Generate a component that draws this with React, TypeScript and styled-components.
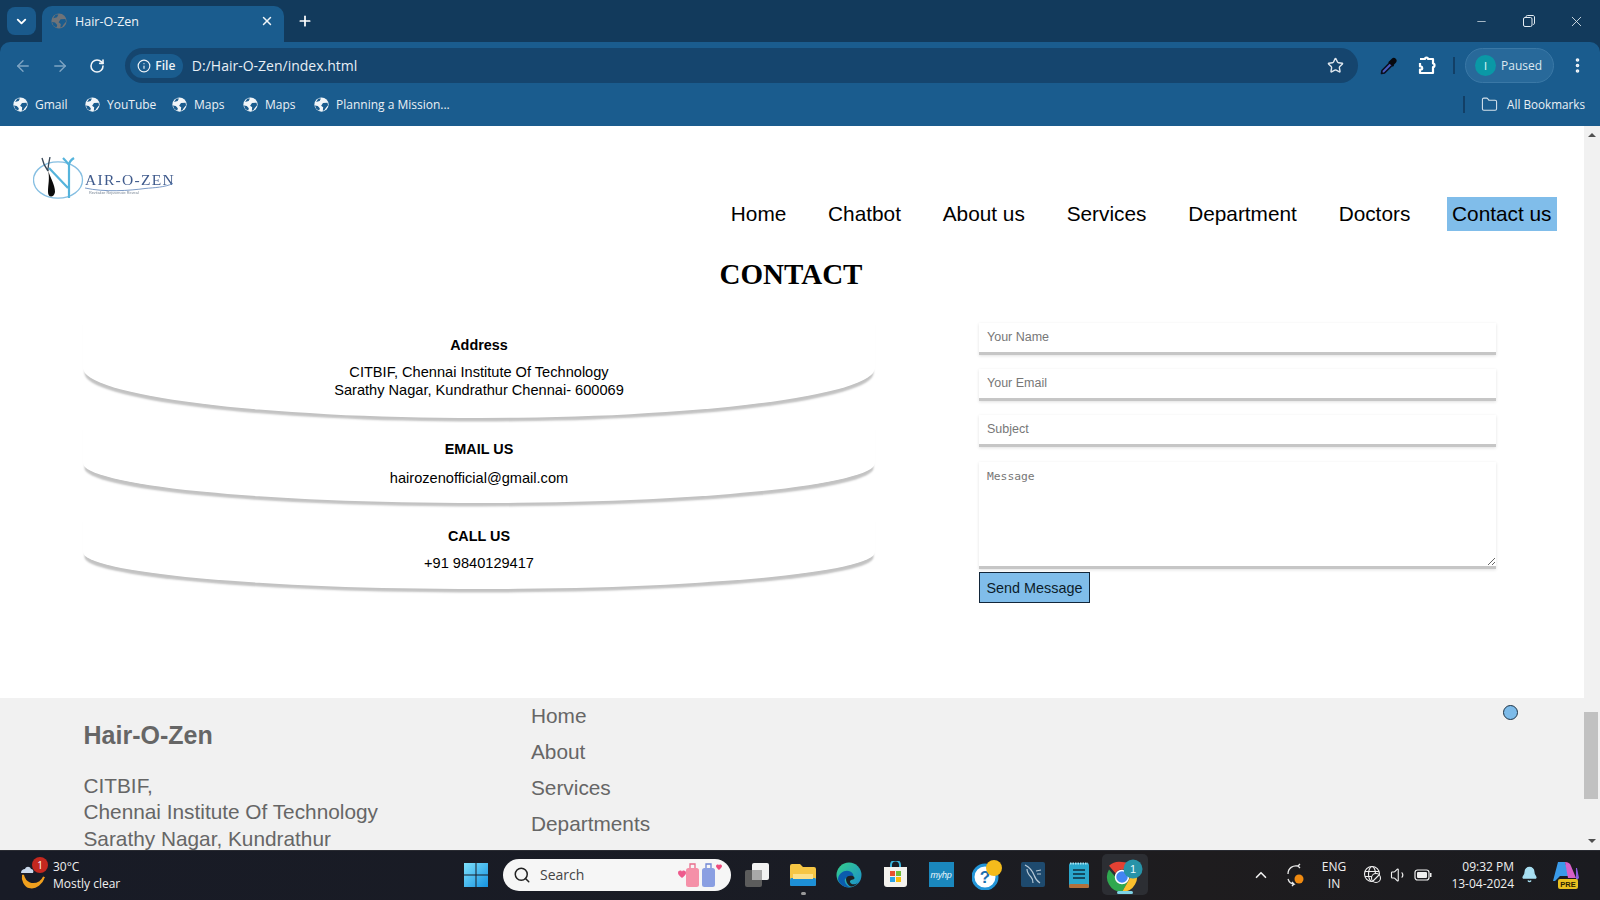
import React from "react";
import styled, { createGlobalStyle } from "styled-components";
import { ChevronDown, X, Plus, ArrowLeft, ArrowRight, RotateCw, Info, Star, MoreVertical, Folder, Minus, Search as SearchIcon, ChevronUp, Volume1, Bell } from "lucide-react";

const Global = createGlobalStyle`
  html, body { margin: 0; padding: 0; height: 100%; overflow: hidden; background: #fff; }
  #root { height: 100%; }
  * { box-sizing: border-box; }
`;

const Screen = styled.div`
  width: 1600px; height: 900px; display: flex; flex-direction: column; overflow: hidden;
  font-family: "Liberation Sans", Arial, sans-serif;
`;

/* ---------- browser chrome ---------- */
const ChromeFrame = styled.header`
  flex: none; background: #123a5c; font-family: "Open Sans", "Noto Sans", sans-serif; color: #fff;
`;
const TabStrip = styled.div`
  height: 42px; display: flex; align-items: flex-end; padding-left: 7px;
`;
const TabMenu = styled.button`
  width: 29px; height: 28px; margin: 0 6px 7px 0; border: 0; border-radius: 8px; background: #1a5a8c; color: #fff;
  display: flex; align-items: center; justify-content: center; padding: 0;
`;
const Tab = styled.div`
  width: 242px; height: 36px; background: #1a5c8e; border-radius: 10px 10px 0 0; display: flex; align-items: center;
  padding: 0 10px 6px 9px; font-size: 12.5px; color: #f0f4f8; gap: 8px;
`;
const TabTitle = styled.span`flex: 1;`;
const NewTab = styled.button`
  width: 28px; height: 28px; margin: 0 0 1px 7px; align-self: center; border: 0; background: none; color: #fff; padding: 0;
  display: flex; align-items: center; justify-content: center;
`;
const WindowControls = styled.div`
  margin-left: auto; height: 42px; display: flex; align-items: center; color: #e4ecf2;
`;
const WinButton = styled.div`
  width: 47.5px; height: 42px; display: flex; align-items: center; justify-content: center;
`;
const Toolbar = styled.div`
  height: 42px; background: #1a5c8e; border-radius: 10px 10px 0 0; display: flex; align-items: center; padding: 5px 0 0 5px;
`;
const NavIcon = styled.div<{ $dim?: boolean }>`
  width: 36px; height: 34px; margin-right: 1px; display: flex; align-items: center; justify-content: center;
  color: ${(p) => (p.$dim ? "#7fa5c4" : "#f2f6f9")};
`;
const UrlBar = styled.div`
  width: 1235px; height: 35px; margin-left: 9px; border-radius: 18px; background: #15456e; display: flex; align-items: center; padding: 0 14px 0 5px;
`;
const FileChip = styled.div`
  width: 53px; height: 24px; border-radius: 12px; background: #1a5c8e; display: flex; align-items: center; justify-content: center; gap: 4px;
  font-size: 12px; font-weight: 600; color: #eef3f7;
`;
const UrlText = styled.span`
  margin-left: 9px; flex: 1; font-size: 14px; color: #e8eff5;
`;
const ToolIcon = styled.div<{ $w: number; $ml?: number }>`
  width: ${(p) => p.$w}px; height: 34px; margin-left: ${(p) => p.$ml ?? 0}px; display: flex; align-items: center; justify-content: center; color: #f4f7fa; flex: none;
`;
const Divider = styled.div<{ $mx: number }>`
  width: 2px; height: 17px; background: #123f66; margin: 0 ${(p) => p.$mx}px; flex: none;
`;
const ProfilePill = styled.div`
  width: 89px; height: 35px; margin-left: 2px; border-radius: 18px; background: #28699a; border: 1px solid #3a78a6; display: flex; align-items: center; padding-left: 9px; gap: 5px;
  font-size: 12px; color: #dbe7f0; flex: none;
`;
const Avatar = styled.div`
  width: 21px; height: 21px; border-radius: 50%; background: #0a98a6; color: #e8fbfd; font-size: 11px; display: flex; align-items: center; justify-content: center;
`;
const BookmarksBar = styled.div`
  height: 42px; background: #1a5c8e; display: flex; align-items: center; padding: 0 15px 2px 13px; font-size: 12px; color: #eaf0f5;
`;
const Bookmark = styled.div<{ $w: number }>`
  width: ${(p) => p.$w}px; display: flex; align-items: center; gap: 7px; white-space: nowrap; flex: none;
`;
const BookmarkSpacer = styled.div`flex: 1;`;
const AllBookmarks = styled.div`
  margin-left: 16px; display: flex; align-items: center; gap: 9px; white-space: nowrap; color: #eaf0f5; font-size: 11.7px;
`;

/* ---------- page ---------- */
const Viewport = styled.div`
  flex: 1; min-height: 0; display: flex; overflow: hidden; background: #fff;
`;
const Page = styled.main`
  flex: 1; min-width: 0; display: flex; flex-direction: column; overflow: hidden; color: #000;
`;
const Scrollbar = styled.div`
  width: 16px; flex: none; background: #f1f1f1; display: flex; flex-direction: column; align-items: center; padding-top: 7px;
`;
const ScrollUp = styled.div`
  width: 0; height: 0; border-left: 4px solid transparent; border-right: 4px solid transparent; border-bottom: 4px solid #505050; margin-left: -1px;
`;
const ScrollThumb = styled.div`
  width: 14px; height: 87px; margin: 575px 2px 0 0; background: #c1c1c1;
`;
const ScrollDown = styled.div`
  width: 0; height: 0; border-left: 4px solid transparent; border-right: 4px solid transparent; border-top: 4px solid #505050; margin: 40px 0 0 -1px;
`;
const SiteHeader = styled.div`
  height: 127px; flex: none; display: flex; justify-content: space-between; padding: 31px 27.5px 0 33px;
`;
const LogoMark = styled.svg`display: block; flex: none; filter: blur(0.4px);`;
const SiteNav = styled.nav`
  display: flex; gap: 31.8px; align-items: flex-start; margin-top: 40px;
`;
const NavLink = styled.a<{ $active?: boolean }>`
  font-size: 20.8px; line-height: 34px; padding: 0 5px; color: #000; white-space: nowrap; height: 34px;
  background: ${(p) => (p.$active ? "#80bdea" : "transparent")};
`;
const PageTitle = styled.h2`
  margin: 0 2px 0 0; height: 65px; padding-top: 5px; text-align: center; font-family: "Liberation Serif", "Times New Roman", serif; font-weight: 700; font-size: 29px; line-height: 33px;
  color: #000;
`;
const ContactGrid = styled.section`
  height: 380px; flex: none; display: flex; padding-left: 83px;
`;
const InfoColumn = styled.div`
  width: 792px; flex: none; display: flex; flex-direction: column;
`;
const InfoCard = styled.div<{ $h: number; $pt: number; $gap: number; $mt: number }>`
  height: ${(p) => p.$h}px; margin-top: ${(p) => p.$mt}px; padding-top: ${(p) => p.$pt}px; text-align: center;
  border-radius: 0 0 50% 50%; box-shadow: 0 5px 2px -1.5px rgba(0, 0, 0, 0.24); background: #fff;
  h4 { margin: 0 0 ${(p) => p.$gap}px; font-size: 14.4px; line-height: 17px; font-weight: 700; }
  p { margin: 0; font-size: 14.6px; line-height: 17.5px; }
`;
const ContactForm = styled.form`
  width: 517px; margin-left: 104px; flex: none; display: flex; flex-direction: column; padding-top: 5px;
`;
const TextField = styled.input`
  display: block; width: 100%; height: 32px; margin-bottom: 14px; border: 0; border-bottom: 3px solid #c6c6c6; padding: 0 8px 2px; outline: 0;
  font-family: "Liberation Sans", Arial, sans-serif; font-size: 12.5px; background: #fff;
  box-shadow: 0 1px 3px rgba(0, 0, 0, 0.12);
  &::placeholder { color: #777; opacity: 1; }
`;
const MessageField = styled.textarea`
  display: block; width: 100%; height: 107px; margin: 1px 0 3px; border: 0; border-bottom: 3px solid #c6c6c6; padding: 8px; outline: 0;
  font-family: "DejaVu Sans Mono", monospace; font-size: 11.3px; background: #fff;
  box-shadow: 0 1px 3px rgba(0, 0, 0, 0.12);
  &::placeholder { color: #777; opacity: 1; }
`;
const SendButton = styled.button`
  width: 111px; height: 31px; padding: 0; background: #80bdea; border: 1px solid #12263a; font-family: "Liberation Sans", Arial, sans-serif; font-size: 14.4px; color: #0c1c2a;
`;
const Footer = styled.footer`
  flex: 1; min-height: 0; background: #f1f1f1; display: flex; padding-left: 83.5px; position: relative; color: #666; overflow: hidden;
`;
const FooterAbout = styled.div`
  width: 447.5px; flex: none; padding-top: 21px;
  h3 { margin: 0 0 22px; font-size: 25px; line-height: 32px; font-weight: 700; color: #666; }
  p { margin: 0; font-size: 20.8px; line-height: 26.3px; }
`;
const FooterLinks = styled.div`
  display: flex; flex-direction: column; margin-top: -0.5px;
  a { font-size: 20.8px; line-height: 36.3px; color: #666; }
`;
const ScrollTop = styled.div`
  position: absolute; left: 1503px; top: 7px; width: 15px; height: 15px; border-radius: 50%; background: #7dbbe9; border: 1px solid #1d3346;
`;

/* ---------- taskbar ---------- */
const Taskbar = styled.footer`
  height: 50px; flex: none; background: linear-gradient(90deg, #181b26 0%, #1a1c24 55%, #1e1c1e 75%, #1a1b20 100%); display: flex; align-items: center; color: #f0f0f0;
  font-family: "Open Sans", "Noto Sans", sans-serif; border-top: 1px solid #2a2c33; padding-bottom: 2px;
`;
const Weather = styled.div`
  width: 453px; flex: none; display: flex; align-items: center; padding-left: 20px; gap: 7px; font-size: 12px; line-height: 17px;
`;
const WeatherIconWrap = styled.div`
  position: relative; width: 26px; height: 30px; flex: none;
`;
const WeatherBadge = styled.span`
  position: absolute; left: 12px; top: -3px; width: 16px; height: 16px; border-radius: 50%; background: #c4281f; color: #fff; font-size: 10px; line-height: 16px; text-align: center;
`;
const TaskCell = styled.div<{ $active?: boolean }>`
  width: 46px; height: 41px; flex: none; display: flex; align-items: center; justify-content: center; position: relative; border-radius: 5px;
  background: ${(p) => (p.$active ? "#2c2e33" : "transparent")};
`;
const ActiveMark = styled.span`
  position: absolute; bottom: 1px; left: 15px; width: 16px; height: 3px; border-radius: 2px; background: #7fd3e6;
`;
const OpenMark = styled.span`
  position: absolute; bottom: 0; left: 21px; width: 5px; height: 3px; border-radius: 2px; background: #9a9a9a;
`;
const SearchPill = styled.div`
  width: 228px; height: 32px; margin: 0 3px 0 4px; border-radius: 16px; background: #f6f6f6; display: flex; align-items: center; padding: 0 5px 0 10px; gap: 9px;
  font-size: 14px; color: #444; flex: none;
`;
const SearchLabel = styled.span`flex: 1;`;
const Tray = styled.div`
  margin-left: 96px; display: flex; align-items: center; flex: none;
`;
const TrayCell = styled.div<{ $w: number; $ml?: number }>`
  width: ${(p) => p.$w}px; height: 40px; margin-left: ${(p) => p.$ml ?? 0}px; display: flex; align-items: center; justify-content: center; flex: none; color: #f0f0f0;
`;
const LangText = styled.div`
  font-size: 12px; line-height: 17px; text-align: center; width: 40px; flex: none;
`;
const ClockText = styled.div`
  font-size: 12px; line-height: 17px; text-align: right; width: 77px; flex: none; margin-left: 2px; white-space: nowrap;
`;

/* ---------- drawings ---------- */
const GlobeIcon = ({ size = 15, ground = "#1a5c8e", fill = "#f1f5f8" }) => (
  <svg width={size} height={size} viewBox="0 0 16 16">
    <circle cx="8" cy="8" r="7.6" fill={fill} />
    <path d="M2.2 5.2 6 4.2 7.4 1.6 4.6 1.6ZM9.6 6.3 14.4 6 15 8.8 12.6 11.6 11 14 9.4 14.6 9.8 11 7.6 9.2Z" fill={ground} />
    <path d="M1 9l3 .6 2.2 2.4-.6 2.4L2.6 13Z" fill={ground} />
  </svg>
);
const Logo = () => (
  <LogoMark width="145" height="46" viewBox="0 0 145 46">
    <ellipse cx="25" cy="23" rx="24.5" ry="18.2" fill="none" stroke="#86bfe2" strokeWidth="1.3" />
    <path d="M9 1 C10 6 12 10 15 14 M17 0 C16 5 15 9 15 14" stroke="#3a4a5a" strokeWidth="1.3" fill="none" />
    <path d="M15 13 C17 20 22 28 22 35 C21 41 15 41 15 35 C15 27 17 22 15 13Z" fill="#0b0b0b" />
    <path d="M16 11 L35 31 M36 41 L36 8 C36 5 38 3 41 1 M36 8 C34 5 32 3 30 1" stroke="#55b4dc" strokeWidth="2.2" fill="none" />
    <text x="52" y="28" fontFamily="'Liberation Serif', serif" fontSize="15.5" letterSpacing="1.3" fill="#3f5a8c">AIR-O-ZEN</text>
    <path d="M52 31 C72 35.5 97 33.5 112 31.5 C122 30.5 131 30.500 140 26.5" stroke="#6d8fc0" strokeWidth="0.9" fill="none" />
    <text x="56" y="37" fontFamily="'Liberation Sans', sans-serif" fontSize="3.8" fill="#7a8796">Revitalize Rejuvenate Reveal</text>
  </LogoMark>
);
const Dropper = () => (
  <svg width="20" height="20" viewBox="0 0 20 20">
    <path d="M2.5 17.5 L3 14.5 L11 6.5 L13.5 9 L5.5 17 Z" fill="#4a5bc4" stroke="#0a0f1e" strokeWidth="1.6" strokeLinejoin="round" />
    <path d="M10.5 5 L12.8 2.7 C14 1.5 15.5 1.5 16.8 2.8 C18 4 18 5.6 16.8 6.8 L14.7 9 L15 9.7 L13.8 10.8 L9.2 6.2 L10.2 5.2 Z" fill="#07090f" />
  </svg>
);
const PuzzleIcon = () => (
  <svg width="20" height="20" viewBox="0 0 20 20" fill="none" stroke="#fff" strokeWidth="2.2" strokeLinejoin="round">
    <path d="M3 3h5c0-2 3-2 3 0h5v4.5c2 0 2 3.5 0 3.5v6H3v-3.5h1.5c1 0 1-3-.2-3H3V7" />
  </svg>
);
const RestoreIcon = () => (
  <svg width="12" height="12" viewBox="0 0 12 12" fill="none" stroke="#e4ecf2" strokeWidth="1">
    <rect x="0.5" y="2.5" width="8.5" height="9" rx="1.5" />
    <path d="M3 2.4V1.8C3 1 3.6 .5 4.3 .5H10c.8 0 1.5.7 1.5 1.5v6.2c0 .7-.5 1.3-1.3 1.3" />
  </svg>
);
const WeatherIcon = () => (
  <svg width="26" height="30" viewBox="0 0 26 30">
    <path d="M3 15 C5 24 13 26 20 22 C22 21 23 19 24 17 C22 23 16 29 9 27 C5 26 2 20 3 15Z" fill="#f0a01e" stroke="#f0a01e" strokeWidth="2" />
    <path d="M1 13 C1 10 3 9 5 9 C6 6 10 6 11 9 C13 9 14 11 13 13 Z" fill="#c9d8ea" />
  </svg>
);
const WinLogo = () => (
  <svg width="24" height="24" viewBox="0 0 24 24">
    <defs><linearGradient id="wl" x1="0" y1="0" x2="1" y2="1"><stop offset="0" stopColor="#7ee0fb" /><stop offset="1" stopColor="#1492e0" /></linearGradient></defs>
    <path d="M0 0h11.5v11.5H0zM12.5 0H24v11.5H12.5zM0 12.5h11.5V24H0zM12.5 12.5H24V24H12.5z" fill="url(#wl)" />
  </svg>
);
const Luggage = () => (
  <svg width="50" height="26" viewBox="0 0 50 26">
    <path d="M2 11c0-3 4-3 4-1 0-2 4-2 4 1 0 2-4 5-4 5s-4-3-4-5z" fill="#ee5a8c" />
    <rect x="10" y="6" width="13" height="19" rx="2.5" fill="#f590a8" />
    <path d="M14 6V2h5v4" fill="none" stroke="#e86c8c" strokeWidth="1.3" />
    <rect x="26" y="6" width="13" height="19" rx="2.5" fill="#8a9fe2" />
    <path d="M30 6V2h5v4" fill="none" stroke="#6f85d4" strokeWidth="1.3" />
    <path d="M40 4c0-2 3-2 3-.6 0-1.4 3-1.4 3 .6 0 1.6-3 4-3 4s-3-2.4-3-4z" fill="#ee4a7c" />
  </svg>
);
const TaskView = () => (
  <svg width="26" height="26" viewBox="0 0 26 26">
    <rect x="1" y="8" width="17" height="17" rx="2" fill="#5c5c5c" />
    <rect x="8" y="1" width="17" height="17" rx="2" fill="#f2f2f2" />
    <rect x="8" y="8" width="10" height="10" fill="#a8a8a8" />
  </svg>
);
const Explorer = () => (
  <svg width="28" height="24" viewBox="0 0 28 24">
    <path d="M1 3a2 2 0 0 1 2-2h8l3 3h11a2 2 0 0 1 2 2v15a2 2 0 0 1-2 2H3a2 2 0 0 1-2-2z" fill="#f6c644" />
    <rect x="1" y="15" width="26" height="8" rx="1.5" fill="#1d8fd6" />
    <rect x="4" y="11" width="20" height="5" fill="#fbe08a" />
  </svg>
);
const Edge = () => (
  <svg width="26" height="26" viewBox="0 0 26 26">
    <defs><linearGradient id="ed" x1="0" y1="0" x2="1" y2="1"><stop offset="0" stopColor="#35d08a" /><stop offset="1" stopColor="#1a8ccf" /></linearGradient></defs>
    <circle cx="13" cy="13" r="12.5" fill="url(#ed)" />
    <path d="M2 17C3 9 13 6 17 12c1 2 0 4-2 4-3 0-4-1-6 1-1 2 1 7 5 8C8 26 3 22 2 17Z" fill="#0b5cad" />
    <path d="M10 17c0-3 4-4 7-3 2 1 2 3 0 3.5-3 .5-4 2-2 4 2 1.5 5 1 7-1-3 4-7 5-9 3-2-2-3-4-3-6.5Z" fill="#1e2022" />
  </svg>
);
const Store = () => (
  <svg width="25" height="27" viewBox="0 0 25 27">
    <path d="M8 6V4a4 4 0 0 1 9 0v2" fill="none" stroke="#3bb5dc" strokeWidth="2" />
    <path d="M1 6h23v17a3 3 0 0 1-3 3H4a3 3 0 0 1-3-3z" fill="#f4f2ee" />
    <rect x="7" y="10" width="5" height="5" fill="#e8502f" /><rect x="13" y="10" width="5" height="5" fill="#6fbe3a" />
    <rect x="7" y="16" width="5" height="5" fill="#2aa4e8" /><rect x="13" y="16" width="5" height="5" fill="#fbbd08" />
  </svg>
);
const MyHpBox = styled.div`
  width: 25px; height: 25px; background: #1a87bd; color: #e8f6fc; font-size: 9px; font-style: italic; font-family: "Liberation Sans", sans-serif; display: flex; align-items: center; justify-content: center; letter-spacing: -0.3px;
`;
const HelpIcon = () => (
  <svg width="30" height="30" viewBox="0 0 30 30">
    <circle cx="13" cy="17" r="12" fill="#fff" stroke="#2295d8" strokeWidth="3" />
    <text x="13" y="23" textAnchor="middle" fontFamily="'Liberation Sans', sans-serif" fontWeight="700" fontSize="17" fill="#1c6fb0">?</text>
    <circle cx="22" cy="8" r="8" fill="#f4bb1c" />
  </svg>
);
const MysqlIcon = () => (
  <svg width="24" height="25" viewBox="0 0 24 25">
    <rect width="24" height="25" rx="2" fill="#1e4a6e" />
    <path d="M4 3c4 2 7 5 9 10 1 3 3 6 6 8M6 7c0 4 2 6 4 8 1 1 2 3 2 6M15 9l5-1M16 12h4" fill="none" stroke="#b6c8d6" strokeWidth="1.2" />
  </svg>
);
const NotepadIcon = () => (
  <svg width="20" height="26" viewBox="0 0 20 26">
    <rect y="1" width="20" height="25" rx="2" fill="#2aa7cc" />
    <rect y="22" width="20" height="4" rx="1.5" fill="#b3703a" />
    <path d="M1 1.5h18" stroke="#a8e2f2" strokeWidth="2" strokeDasharray="1.5 1" />
    <path d="M4 8h12M4 12h12M4 16h12" stroke="#0f2e3c" strokeWidth="1.4" />
  </svg>
);
const ChromeIcon = () => (
  <svg width="42" height="34" viewBox="0 0 42 34">
    <g transform="translate(3 4)">
      <path d="M15 0A15 15 0 0 1 28 7.5H15A7.5 7.5 0 0 0 8.5 11.2L2 3.8A15 15 0 0 1 15 0Z" fill="#e34133" />
      <path d="M2 7.5A15 15 0 0 0 15 30L21.5 18.7A7.5 7.5 0 0 1 8.5 15Z" fill="#2fa84f" />
      <path d="M28 7.5A15 15 0 0 1 15 30L21.5 18.7A7.5 7.5 0 0 0 21.5 11.2Z" fill="#fbc02d" />
      <circle cx="15" cy="15" r="6.5" fill="#4285f4" stroke="#fff" strokeWidth="1.5" />
    </g>
    <circle cx="29" cy="11" r="9.5" fill="#2793a8" />
    <text x="29" y="15" textAnchor="middle" fontFamily="'Liberation Sans', sans-serif" fontSize="11" fill="#e6fbff">1</text>
  </svg>
);
const SyncIcon = () => (
  <svg width="22" height="26" viewBox="0 0 22 26" fill="none" stroke="#eaeaea" strokeWidth="1.3">
    <path d="M3 12C3 6 8 3 13 4l2-2M13 4l2 2M3 17c1 3 3 5 6 5l-2-2M9 22l-2 2" />
    <circle cx="14" cy="17" r="4.5" fill="#f08a10" stroke="none" />
  </svg>
);
const NetIcon = () => (
  <svg width="19" height="19" viewBox="0 0 19 19" fill="none" stroke="#eee" strokeWidth="1.1">
    <circle cx="9" cy="9" r="7.5" /><ellipse cx="9" cy="9" rx="3.5" ry="7.5" /><path d="M2 6.5h14M2 11.5h14" />
    <circle cx="13" cy="13" r="4.5" fill="#1c1c20" /><path d="M10 16l6-6" />
  </svg>
);
const BatteryIcon = () => (
  <svg width="18" height="12" viewBox="0 0 18 12" fill="none">
    <rect x="1" y="1" width="14" height="10" rx="2.5" stroke="#f0f0f0" strokeWidth="1.2" />
    <rect x="3" y="3" width="10" height="6" rx="1" fill="#f0f0f0" />
    <rect x="16" y="4" width="1.5" height="4" fill="#f0f0f0" />
  </svg>
);
const CopilotIcon = () => (
  <svg width="28" height="30" viewBox="0 0 28 30">
    <path d="M6 2h7l4 14H8L3 21H1Z" fill="#3a9ae8" />
    <path d="M13 2c3 0 5 1 6 4l5 12h-8Z" fill="#d860c8" />
    <path d="M24 8h1l2 10-3 3Z" fill="#8a5ce0" />
    <rect x="6" y="19" width="20" height="10" rx="2" fill="#e8c020" />
    <text x="16" y="27" textAnchor="middle" fontFamily="'Liberation Sans', sans-serif" fontWeight="700" fontSize="7.5" fill="#2a2000">PRE</text>
  </svg>
);

const bookmarks: [string, number][] = [["Gmail", 72], ["YouTube", 87], ["Maps", 71], ["Maps", 71], ["Planning a Mission...", 140]];
const navItems = ["Home", "Chatbot", "About us", "Services", "Department", "Doctors"];

export default function App() {
  return (
    <>
      <Global />
      <Screen>
        <ChromeFrame>
          <TabStrip>
            <TabMenu><ChevronDown size={15} strokeWidth={3} /></TabMenu>
            <Tab>
              <GlobeIcon size={16} fill="#6f7378" />
              <TabTitle>Hair-O-Zen</TabTitle>
              <X size={14} strokeWidth={2.5} />
            </Tab>
            <NewTab><Plus size={16} strokeWidth={2.6} /></NewTab>
            <WindowControls>
              <WinButton><Minus size={13} strokeWidth={1.3} /></WinButton>
              <WinButton><RestoreIcon /></WinButton>
              <WinButton><X size={17} strokeWidth={1.2} /></WinButton>
            </WindowControls>
          </TabStrip>
          <Toolbar>
            <NavIcon $dim><ArrowLeft size={18} strokeWidth={1.8} /></NavIcon>
            <NavIcon $dim><ArrowRight size={18} strokeWidth={1.8} /></NavIcon>
            <NavIcon><RotateCw size={16} strokeWidth={2.4} /></NavIcon>
            <UrlBar>
              <FileChip><Info size={14} strokeWidth={2} />File</FileChip>
              <UrlText>D:/Hair-O-Zen/index.html</UrlText>
              <Star size={17} strokeWidth={2} color="#dfe7ee" />
            </UrlBar>
            <ToolIcon $w={38} $ml={12}><Dropper /></ToolIcon>
            <ToolIcon $w={37}><PuzzleIcon /></ToolIcon>
            <Divider $mx={8} />
            <ProfilePill><Avatar>I</Avatar>Paused</ProfilePill>
            <ToolIcon $w={46}><MoreVertical size={19} strokeWidth={2.6} /></ToolIcon>
          </Toolbar>
          <BookmarksBar>
            {bookmarks.map(([label, w], i) => (
              <Bookmark key={i} $w={w}><GlobeIcon />{label}</Bookmark>
            ))}
            <BookmarkSpacer />
            <Divider $mx={0} />
            <AllBookmarks><Folder size={17} strokeWidth={1.5} color="#d5e2ec" />All Bookmarks</AllBookmarks>
          </BookmarksBar>
        </ChromeFrame>

        <Viewport>
          <Page>
            <SiteHeader>
              <Logo />
              <SiteNav>
                {navItems.map((n) => <NavLink key={n}>{n}</NavLink>)}
                <NavLink $active>Contact us</NavLink>
              </SiteNav>
            </SiteHeader>
            <PageTitle>CONTACT</PageTitle>
            <ContactGrid>
              <InfoColumn>
                <InfoCard $h={100} $pt={19} $gap={10} $mt={0}>
                  <h4>Address</h4>
                  <p>CITBIF, Chennai Institute Of Technology<br />Sarathy Nagar, Kundrathur Chennai- 600069</p>
                </InfoCard>
                <InfoCard $h={80} $pt={18} $gap={12} $mt={5}>
                  <h4>EMAIL US</h4>
                  <p>hairozenofficial@gmail.com</p>
                </InfoCard>
                <InfoCard $h={74} $pt={13} $gap={10} $mt={12}>
                  <h4>CALL US</h4>
                  <p>+91 9840129417</p>
                </InfoCard>
              </InfoColumn>
              <ContactForm>
                <TextField placeholder="Your Name" />
                <TextField placeholder="Your Email" />
                <TextField placeholder="Subject" />
                <MessageField placeholder="Message" />
                <div><SendButton type="button">Send Message</SendButton></div>
              </ContactForm>
            </ContactGrid>
            <Footer>
              <FooterAbout>
                <h3>Hair-O-Zen</h3>
                <p>CITBIF,<br />Chennai Institute Of Technology<br />Sarathy Nagar, Kundrathur</p>
              </FooterAbout>
              <FooterLinks>
                <a>Home</a>
                <a>About</a>
                <a>Services</a>
                <a>Departments</a>
              </FooterLinks>
              <ScrollTop />
            </Footer>
          </Page>
          <Scrollbar>
            <ScrollUp />
            <ScrollThumb />
            <ScrollDown />
          </Scrollbar>
        </Viewport>

        <Taskbar>
          <Weather>
            <WeatherIconWrap><WeatherIcon /><WeatherBadge>1</WeatherBadge></WeatherIconWrap>
            <div>30°C<br />Mostly clear</div>
          </Weather>
          <TaskCell><WinLogo /></TaskCell>
          <SearchPill>
            <SearchIcon size={18} strokeWidth={2} color="#222" />
            <SearchLabel>Search</SearchLabel>
            <Luggage />
          </SearchPill>
          <TaskCell><TaskView /></TaskCell>
          <TaskCell><Explorer /><OpenMark /></TaskCell>
          <TaskCell><Edge /></TaskCell>
          <TaskCell><Store /></TaskCell>
          <TaskCell><MyHpBox>myhp</MyHpBox></TaskCell>
          <TaskCell><HelpIcon /></TaskCell>
          <TaskCell><MysqlIcon /></TaskCell>
          <TaskCell><NotepadIcon /></TaskCell>
          <TaskCell $active><ChromeIcon /><ActiveMark /></TaskCell>
          <Tray>
            <TrayCell $w={34}><ChevronUp size={18} strokeWidth={2.2} /></TrayCell>
            <TrayCell $w={36}><SyncIcon /></TrayCell>
            <LangText>ENG<br />IN</LangText>
            <TrayCell $w={30} $ml={3}><NetIcon /></TrayCell>
            <TrayCell $w={24}><Volume1 size={18} strokeWidth={1.5} /></TrayCell>
            <TrayCell $w={24}><BatteryIcon /></TrayCell>
            <ClockText>09:32 PM<br />13-04-2024</ClockText>
            <TrayCell $w={30}><Bell size={17} fill="#a8dff2" color="#a8dff2" /></TrayCell>
            <TrayCell $w={36} $ml={4}><CopilotIcon /></TrayCell>
          </Tray>
        </Taskbar>
      </Screen>
    </>
  );
}
